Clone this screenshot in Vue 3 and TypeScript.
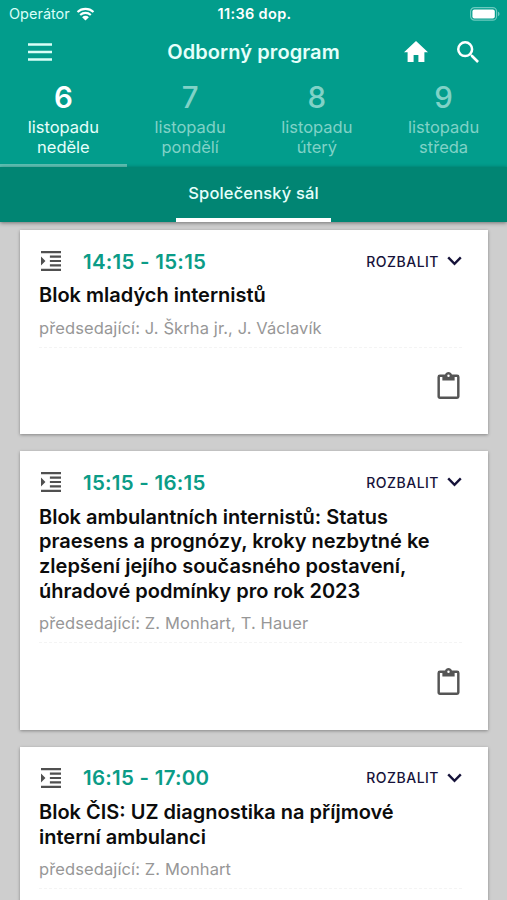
<script setup lang="ts">
interface Day {
  num: number
  month: string
  name: string
}
interface Block {
  time: string
  lines: string[]
  chairs: string
}

const days: Day[] = [
  { num: 6, month: 'listopadu', name: 'neděle' },
  { num: 7, month: 'listopadu', name: 'pondělí' },
  { num: 8, month: 'listopadu', name: 'úterý' },
  { num: 9, month: 'listopadu', name: 'středa' },
]
const activeDay = 6

const blocks: Block[] = [
  { time: '14:15 - 15:15', lines: ['Blok mladých internistů'], chairs: 'J. Škrha jr., J. Václavík' },
  {
    time: '15:15 - 16:15',
    lines: [
      'Blok ambulantních internistů: Status',
      'praesens a prognózy, kroky nezbytné ke',
      'zlepšení jejího současného postavení,',
      'úhradové podmínky pro rok 2023',
    ],
    chairs: 'Z. Monhart, T. Hauer',
  },
  {
    time: '16:15 - 17:00',
    lines: ['Blok ČIS: UZ diagnostika na příjmové', 'interní ambulanci'],
    chairs: 'Z. Monhart',
  },
]
</script>

<template>
  <div class="screen">
    <header class="top">
      <div class="status">
        <div class="carrier">
          <span>Operátor</span>
          <svg class="wifi" viewBox="0 0 18 14">
            <path d="M1 5.1a11.6 11.6 0 0 1 16 0M3.7 8a7.7 7.7 0 0 1 10.6 0" />
            <path class="dot" d="M9 13.6 5.6 10.2a4.9 4.9 0 0 1 6.8 0z" />
          </svg>
        </div>
        <span class="clock">11:36 dop.</span>
        <svg class="battery" viewBox="0 0 30 14">
          <rect class="shell" x="0.6" y="0.6" width="26" height="12.6" rx="4" />
          <rect x="2.4" y="2.4" width="22.4" height="9" rx="2" />
          <path class="tip" d="M28 4.8c2 .6 2 3.8 0 4.4z" />
        </svg>
      </div>

      <div class="appbar">
        <svg class="menu" viewBox="0 0 24 18"><path d="M0 1.5h24M0 9h24M0 16.5h24" /></svg>
        <h1>Odborný program</h1>
        <div class="actions">
          <svg class="home" viewBox="0 0 24 21"><path d="M9.6 21v-7h4.8v7h6V11.3H24L12 0 0 11.3h3.6V21z" /></svg>
          <svg class="search" viewBox="3 3 17.5 17.5">
            <path d="M15.5 14h-.79l-.28-.27A6.47 6.47 0 0 0 16 9.5 6.5 6.5 0 1 0 9.5 16c1.61 0 3.09-.59 4.23-1.57l.27.28v.79l5 4.99L20.49 19zM9.5 14a4.5 4.5 0 1 1 0-9 4.5 4.5 0 0 1 0 9z" />
          </svg>
        </div>
      </div>

      <nav class="days">
        <div v-for="d in days" :key="d.num" class="day" :class="{ active: d.num === activeDay }">
          <b>{{ d.num }}</b>
          <span>{{ d.month }}</span>
          <span>{{ d.name }}</span>
        </div>
      </nav>
    </header>

    <div class="halls">
      <div class="hall">Společenský sál</div>
    </div>

    <main>
      <article v-for="b in blocks" :key="b.time" class="card">
        <div class="head">
          <svg class="indent" viewBox="3 3 18 18">
            <path d="M3 21h18v-2H3v2zM3 8v8l4-4-4-4zm8 9h10v-2H11v2zM3 3v2h18V3H3zm8 6h10V7H11v2zm0 4h10v-2H11v2z" />
          </svg>
          <span class="time">{{ b.time }}</span>
          <span class="expand">ROZBALIT</span>
          <svg class="chevron" viewBox="0 0 15 10"><path d="M1.2 1.4 7.5 7.8 13.8 1.4" /></svg>
        </div>
        <h2><span v-for="l in b.lines" :key="l">{{ l }}</span></h2>
        <p>předsedající: {{ b.chairs }}</p>
        <div class="foot">
          <svg class="clip" viewBox="3 0 18 22">
            <path d="M19 2h-4.18C14.4.84 13.3 0 12 0S9.6.84 9.18 2H5a2 2 0 0 0-2 2v16c0 1.1.9 2 2 2h14a2 2 0 0 0 2-2V4a2 2 0 0 0-2-2zm-7 0a1 1 0 1 1 0 2 1 1 0 0 1 0-2zm7 18H5V4h2v3h10V4h2v16z" />
          </svg>
        </div>
      </article>
    </main>
  </div>
</template>

<style>
body {
  margin: 0;
  overflow: hidden;
}
</style>

<style scoped>
.screen {
  height: 900px;
  overflow: hidden;
  display: flex;
  flex-direction: column;
  background: #cecece;
  font-family: Inter, "Liberation Sans", sans-serif;
}
.top {
  flex: none;
  height: 167px;
  background: #029d8c;
  color: #fff;
}
.status {
  height: 27px;
  padding: 0 7px 0 9px;
  display: grid;
  grid-template-columns: 1fr auto 1fr;
  align-items: center;
}
.carrier {
  display: flex;
  align-items: center;
  gap: 6px;
  font-size: 14.5px;
  color: #d9fff8;
}
.wifi {
  width: 19px;
  height: 14px;
  fill: none;
  stroke: #fff;
  stroke-width: 2.1;
}
.wifi .dot {
  fill: #fff;
  stroke: none;
}
.clock {
  font-size: 14.5px;
  font-weight: 600;
  letter-spacing: 0.35px;
}
.battery {
  justify-self: end;
  width: 30px;
  height: 14px;
  fill: #fff;
}
.battery .shell {
  fill: none;
  stroke: #6ccabf;
  stroke-width: 1.2;
}
.battery .tip {
  fill: #6ccabf;
}
.appbar {
  height: 49px;
  padding: 0 28px;
  display: grid;
  grid-template-columns: 1fr auto 1fr;
  align-items: center;
}
.menu {
  width: 24px;
  height: 18px;
  stroke: #d9fff8;
  stroke-width: 2.6;
}
h1 {
  margin: 1px 0 0;
  font-size: 20px;
  font-weight: 600;
  letter-spacing: 0.08px;
  color: #e6fffb;
}
.actions {
  display: flex;
  justify-content: flex-end;
  align-items: center;
  gap: 29px;
  fill: #fff;
}
.home {
  width: 24px;
  height: 21px;
}
.search {
  width: 22px;
  height: 22px;
}
.days {
  height: 91px;
  display: grid;
  grid-template-columns: repeat(4, 1fr);
}
.day {
  box-sizing: border-box;
  display: flex;
  flex-direction: column;
  align-items: center;
  padding-top: 2px;
  border-bottom: 3px solid transparent;
  color: #80d2c7;
  font-size: 16.5px;
  line-height: 20px;
}
.day b {
  margin-bottom: 1px;
  font-size: 29.5px;
  font-weight: 550;
  line-height: 38px;
}
.day.active {
  color: #e6fffb;
  border-bottom-color: #5cc0b3;
}
.day.active b {
  font-weight: 600;
  color: #fff;
}
.halls {
  position: relative;
  flex: none;
  height: 55px;
  display: flex;
  justify-content: center;
  background: #018573;
  box-shadow: 0 1px 4px rgba(0, 0, 0, 0.45);
}
.hall {
  box-sizing: border-box;
  width: 155px;
  text-align: center;
  font-size: 16.5px;
  font-weight: 500;
  letter-spacing: 0.15px;
  line-height: 53px;
  color: #e6fffb;
  border-bottom: 4px solid #fff;
}
main {
  padding: 8px 19px 0 20px;
  display: flex;
  flex-direction: column;
  gap: 17px;
}
.card {
  flex: none;
  box-sizing: border-box;
  padding: 10px 26px 0 19px;
  background: #fff;
  box-shadow: 0 1px 3px rgba(0, 0, 0, 0.35);
}
.head {
  height: 42px;
  display: flex;
  align-items: center;
}
.indent {
  width: 20px;
  height: 20px;
  margin-left: 2px;
  fill: #505050;
}
.time {
  flex: 1;
  margin-left: 22px;
  font-size: 20.5px;
  font-weight: 600;
  letter-spacing: 0.25px;
  color: #0b9c87;
}
.expand {
  font-size: 14px;
  font-weight: 500;
  letter-spacing: 0.5px;
  color: #16133a;
}
.chevron {
  width: 15px;
  height: 10px;
  margin-left: 8px;
  fill: none;
  stroke: #16133a;
  stroke-width: 2.4;
}
h2 {
  margin: 1.3px 0 0;
  font-size: 20px;
  font-weight: 600;
  line-height: 24.75px;
  color: #0c0c0c;
}
h2 span {
  display: block;
  white-space: nowrap;
}
p {
  margin: 8.7px 0 8px;
  font-size: 16.5px;
  line-height: 22px;
  letter-spacing: 0.11px;
  color: #979797;
}
.foot {
  box-sizing: border-box;
  height: 87.5px;
  padding: 24.5px 2px 0 0;
  border-top: 1px dashed #f4f4f4;
  display: flex;
  justify-content: flex-end;
  align-items: flex-start;
}
.clip {
  width: 23px;
  height: 27px;
  fill: #555;
}
</style>
